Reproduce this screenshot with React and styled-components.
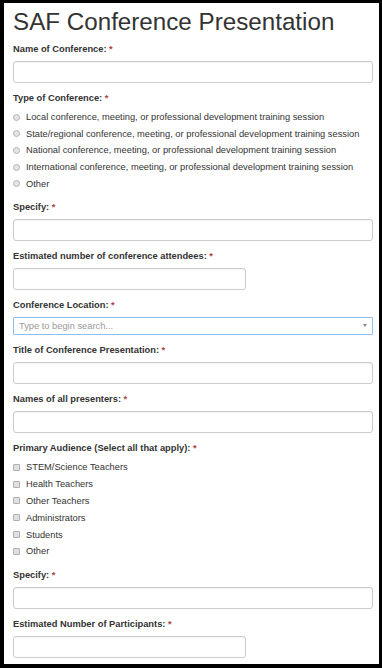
import React from "react";
import styled, { createGlobalStyle } from "styled-components";

const Global = createGlobalStyle`
  html, body { margin: 0; padding: 0; background: #000; }
  body { font-family: "Liberation Sans", Arial, sans-serif; color: #333; }
  * { box-sizing: border-box; }
`;

const Frame = styled.div`
  width: 382px;
  height: 668px;
  overflow: hidden;
  background: #fff;
  border-style: solid;
  border-color: #000;
  border-width: 3px 3px 4px 4px;
  padding: 0 6px 0 9px;
`;

const Title = styled.h1`
  margin: 4px 0 0;
  font-size: 24.2px;
  line-height: 30px;
  font-weight: 400;
  color: #333;
  white-space: nowrap;
`;

const Form = styled.div`
  margin-top: 5px;
  display: flex;
  flex-direction: column;
  gap: 8px;
`;

const Group = styled.div`
  display: flex;
  flex-direction: column;
  align-items: flex-start;
`;

const Label = styled.div`
  font-size: 9.3px;
  line-height: 14px;
  font-weight: 700;
  color: #333;
  margin-bottom: ${(p) => (p.$tight ? 4 : 5)}px;
  white-space: nowrap;
`;

const Req = styled.span`
  color: #a94442;
  margin-left: 2.5px;
`;

const Input = styled.div`
  width: ${(p) => (p.$half ? "233px" : "100%")};
  height: 22px;
  border: 1px solid #ccc;
  border-radius: 3px;
  background: #fff;
  box-shadow: inset 0 1px 1px rgba(0, 0, 0, 0.05);
`;

const Select = styled.div`
  width: 100%;
  height: 18px;
  border: 1px solid #8fbdf0;
  border-radius: 1px;
  background: #fff;
  display: flex;
  align-items: center;
  justify-content: space-between;
  padding: 0 5px 0 5px;
`;

const Placeholder = styled.span`
  font-size: 9.3px;
  color: #999;
`;

const Arrow = styled.span`
  width: 0;
  height: 0;
  border-left: 2.5px solid transparent;
  border-right: 2.5px solid transparent;
  border-top: 3px solid #888;
`;

const OptionList = styled.div`
  display: flex;
  flex-direction: column;
  width: 100%;
`;

const Option = styled.div`
  height: ${(p) => p.$h}px;
  display: flex;
  align-items: center;
  gap: 6px;
  font-size: 9.3px;
  color: #333;
  white-space: nowrap;
`;

const Radio = styled.span`
  width: 7px;
  height: 7px;
  border-radius: 50%;
  border: 1px solid #b5b5b5;
  background: #e4e4e4;
  flex: none;
`;

const Check = styled.span`
  width: 7px;
  height: 7px;
  border-radius: 1px;
  border: 1px solid #b0b0b0;
  background: #e0e0e0;
  flex: none;
`;

const Field = ({ label, half }) => (
  <Group>
    <Label>
      {label}
      <Req>*</Req>
    </Label>
    <Input $half={half} />
  </Group>
);

const types = [
  "Local conference, meeting, or professional development training session",
  "State/regional conference, meeting, or professional development training session",
  "National conference, meeting, or professional development training session",
  "International conference, meeting, or professional development training session",
  "Other",
];

const audience = [
  "STEM/Science Teachers",
  "Health Teachers",
  "Other Teachers",
  "Administrators",
  "Students",
  "Other",
];

export default function App() {
  return (
    <>
      <Global />
      <Frame>
        <Title>SAF Conference Presentation</Title>
        <Form>
          <Field label="Name of Conference:" />
          <Group>
            <Label $tight>
              Type of Conference:<Req>*</Req>
            </Label>
            <OptionList>
              {types.map((t) => (
                <Option key={t} $h={16.6}>
                  <Radio />
                  {t}
                </Option>
              ))}
            </OptionList>
          </Group>
          <Field label="Specify:" />
          <Field label="Estimated number of conference attendees:" half />
          <Group>
            <Label>
              Conference Location:<Req>*</Req>
            </Label>
            <Select>
              <Placeholder>Type to begin search...</Placeholder>
              <Arrow />
            </Select>
          </Group>
          <Field label="Title of Conference Presentation:" />
          <Field label="Names of all presenters:" />
          <Group>
            <Label $tight>
              Primary Audience (Select all that apply):<Req>*</Req>
            </Label>
            <OptionList>
              {audience.map((t) => (
                <Option key={t} $h={16.8}>
                  <Check />
                  {t}
                </Option>
              ))}
            </OptionList>
          </Group>
          <Field label="Specify:" />
          <Field label="Estimated Number of Participants:" half />
        </Form>
      </Frame>
    </>
  );
}
